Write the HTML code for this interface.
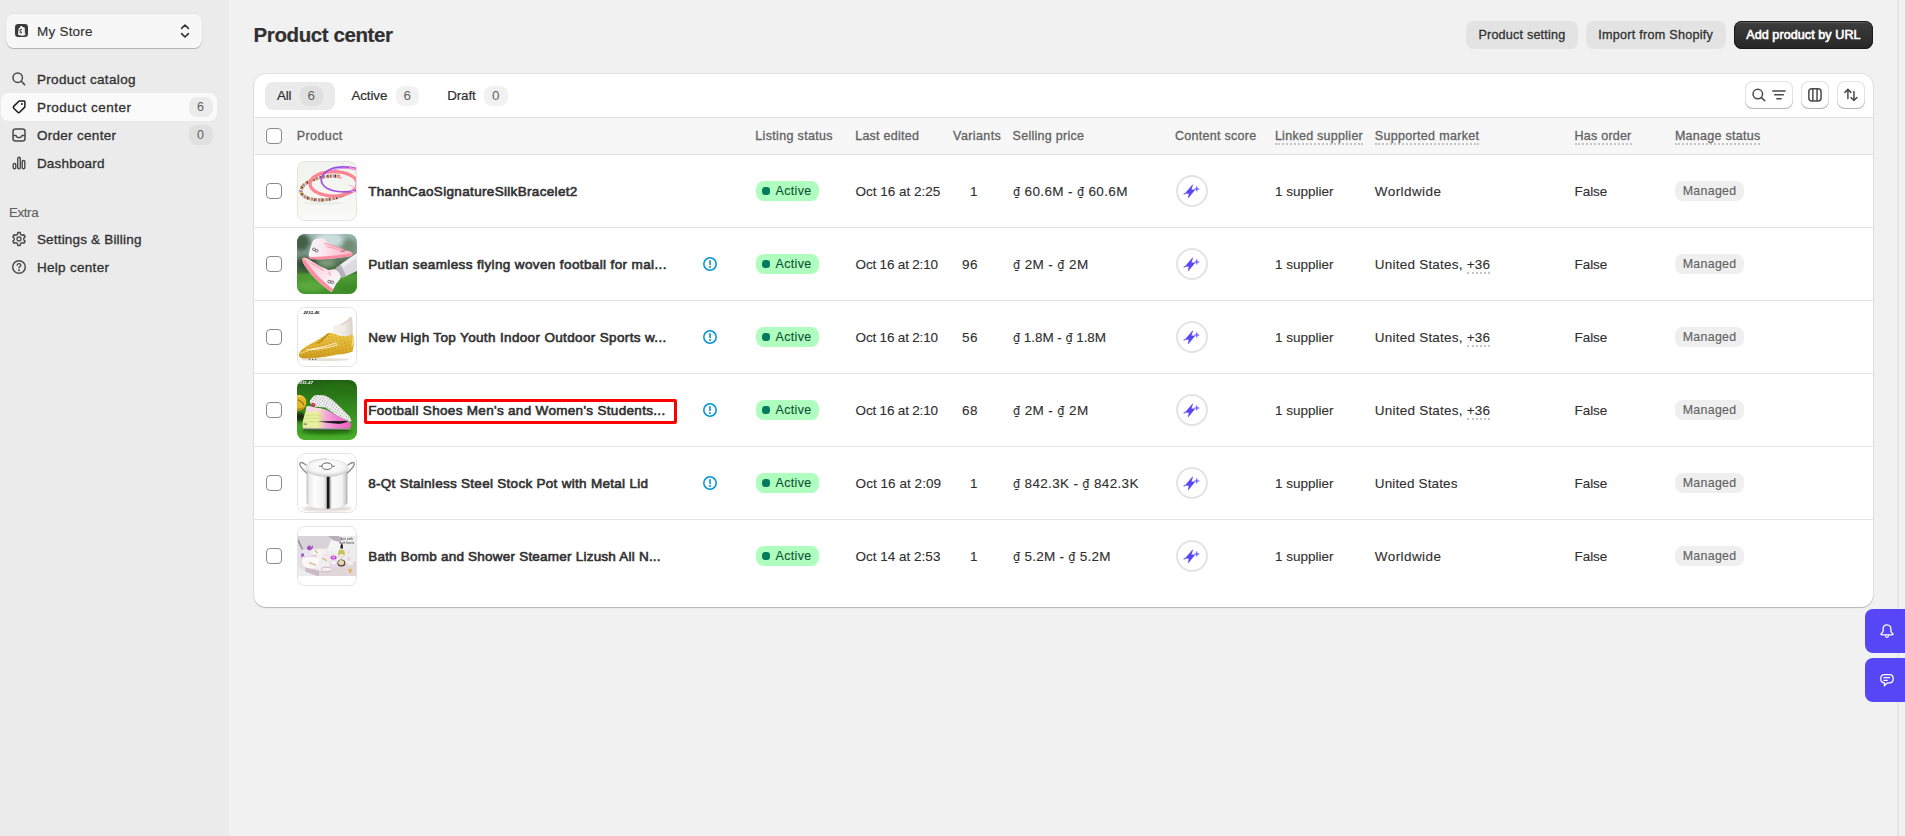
<!DOCTYPE html>
<html lang="en">
<head>
<meta charset="utf-8">
<title>Product center</title>
<style>
*,*:before,*:after{box-sizing:border-box;margin:0;padding:0}
html,body{width:1905px;height:836px;overflow:hidden}
body{background:#f1f1f1;font-family:"Liberation Sans",Arial,sans-serif;font-size:13px;color:#303030;position:relative}
.t{position:absolute;white-space:nowrap;line-height:16px;height:16px}
.sb{-webkit-text-stroke:.6px currentColor}
.md{-webkit-text-stroke:.3px currentColor}
.nv{-webkit-text-stroke:.32px currentColor}
.m2{-webkit-text-stroke:.2px currentColor}
.lt{-webkit-text-stroke:.12px currentColor}
#side{position:absolute;left:0;top:0;width:229px;height:836px;background:#ebebeb}
#store{position:absolute;left:6px;top:14px;width:196px;height:34px;background:#f7f7f7;border-radius:8px;box-shadow:0 1px 0 0 #b5b5b5,0 0 0 1px rgba(0,0,0,.03)}
#store .ico{position:absolute;left:8.6px;top:10.2px;width:13px;height:13px}
#store .chev{position:absolute;left:171px;top:8px;width:16px;height:18px}
.nav{position:absolute;left:1px;width:216px;height:28px;border-radius:8px}
.nav.sel{background:#fafafa}
.nav svg{position:absolute;left:8px;top:4px;width:20px;height:20px}
.nav .b{position:absolute;right:4px;top:4px;width:24px;height:20px;border-radius:8px;background:#e0e0e0}
.nav.sel .b{background:#ebebeb}
.btn{position:absolute;top:21px;height:28px;border-radius:8px;background:#e3e3e3}
.btn.pri{background:linear-gradient(180deg,#3e3e3e,#262626);box-shadow:inset 0 0 0 1px #1a1a1a,inset 0 2px 0 0 rgba(255,255,255,.16)}
#card{position:absolute;left:254px;top:74px;width:1619px;height:533px;background:#fff;border-radius:12px;box-shadow:0 1px 1px 0 rgba(0,0,0,.2),0 0 0 1px #e2e2e2}
.tab{position:absolute;top:82px;height:28px;border-radius:8px}
.tab.sel{background:#ebebeb}
.cnt{position:absolute;top:86px;height:20px;width:23px;border-radius:8px;background:#f1f1f1}
.cnt.sel{background:#e0e0e0}
.tool{position:absolute;top:81px;height:28px;border-radius:8px;background:#fff;box-shadow:inset 0 -1px 0 0 #b5b5b5,inset 0 0 0 1px #e3e3e3}
.tool svg{position:absolute;top:4px;width:20px;height:20px}
#thead{position:absolute;left:254px;top:117px;width:1619px;height:38px;background:#f7f7f7;border-top:1px solid #e3e3e3;border-bottom:1px solid #e3e3e3}
.u{border-bottom:2px dotted #c4c4c4}
.t.u{height:17px}
.hr{position:absolute;left:254px;width:1619px;height:1px;background:#e3e3e3}
.cb{position:absolute;width:16px;height:16px;border-radius:4px;border:1px solid #8a8a8a;background:#fff}
.thumb{position:absolute;left:297px;width:60px;height:60px;border-radius:8px;overflow:hidden;background:#fff}
.thumb svg{display:block;width:60px;height:60px}
.thumb.bd:after{content:"";position:absolute;left:0;top:0;width:60px;height:60px;border-radius:8px;border:1px solid #e3e3e3}
.info{position:absolute;left:702px;width:16px;height:16px}
.st{position:absolute;left:756px;width:63px;height:20px;border-radius:8px;background:#affebf}
.st i{position:absolute;left:6px;top:6px;width:8px;height:8px;border-radius:3.2px;background:#047b5d;display:block}
.cs{position:absolute;left:1176px;width:32px;height:32px;border-radius:50%;border:2px solid #e3e3e3;background:#fff}
.cs svg{position:absolute;left:-2px;top:-2px;width:32px;height:32px}
.ms{position:absolute;left:1675px;width:69px;height:20px;border-radius:8px;background:#efefef}
.hl{position:absolute;left:364px;top:399px;width:313px;height:25px;border:3px solid #f00;border-radius:2px}
.fab{position:absolute;left:1865px;width:40px;height:44px;background:#5646f5;border-radius:8px 0 0 8px}
.fab svg{position:absolute;left:14px;top:14px;width:16px;height:16px}
#sb{position:absolute;left:1897px;top:0;width:2px;height:836px;background:#e4e4e4}
.dd{font-family:"DejaVu Sans Condensed","DejaVu Sans",sans-serif;font-size:.93em}
.sbt{-webkit-text-stroke:.2px currentColor;font-weight:700}
</style>
</head>
<body>
<div id="side">
  <div id="store">
    <svg class="ico" viewBox="0 0 14 14"><rect x="0" y="0" width="14" height="14" rx="3.5" fill="#3a3a3a"/><path d="M3.2 11.6 L4 4.6 L5.2 4.2 C5.4 3 6 2.2 6.9 2.2 C7.6 2.2 8 2.8 8.1 3.6 L9.2 3.4 L10.2 4 L11.2 11.9 L7.6 12.6 Z" fill="#fff"/><path d="M9.2 3.4 L10.2 4 L11.2 11.9 L9.3 12.25 Z" fill="#d6d6d6"/><path d="M7.6 5.9 C6.2 5.3 5.2 6 5.3 7 C5.4 8.2 7 8.1 7 9.1 C7 9.9 5.8 9.9 4.9 9.3" fill="none" stroke="#3a3a3a" stroke-width="1.1"/></svg>
    <svg class="chev" viewBox="0 0 16 18"><path d="M4.6 6.4 L8 3 L11.4 6.4 M4.6 11.6 L8 15 L11.4 11.6" fill="none" stroke="#303030" stroke-width="1.6" stroke-linecap="round" stroke-linejoin="round"/></svg>
  </div>
  <div class="nav" style="top:65px"><svg viewBox="0 0 20 20"><circle cx="8.7" cy="8.7" r="4.7" fill="none" stroke="#4a4a4a" stroke-width="1.5"/><path d="M12.2 12.2 L15.6 15.6" stroke="#4a4a4a" stroke-width="1.5" stroke-linecap="round"/></svg></div>
  <div class="nav sel" style="top:93px"><svg viewBox="0 0 20 20"><path d="M10.6 4.1 L15 4.1 Q15.9 4.1 15.9 5 L15.9 9.4 Q15.9 10 15.5 10.4 L10.6 15.3 Q9.7 16.2 8.8 15.3 L4.7 11.2 Q3.8 10.3 4.7 9.4 L9.6 4.5 Q10 4.1 10.6 4.1 Z" fill="none" stroke="#1a1a1a" stroke-width="1.5" stroke-linejoin="round"/><circle cx="12.9" cy="7.1" r="1" fill="#1a1a1a"/></svg><div class="b"></div></div>
  <div class="nav" style="top:121px"><svg viewBox="0 0 20 20"><rect x="4" y="4" width="12" height="12" rx="2.5" fill="none" stroke="#4a4a4a" stroke-width="1.5"/><path d="M4 10.6 L7 10.6 C7.4 10.6 7.5 12.4 8.6 12.4 L11.4 12.4 C12.5 12.4 12.6 10.6 13 10.6 L16 10.6" fill="none" stroke="#4a4a4a" stroke-width="1.5" stroke-linejoin="round"/></svg><div class="b"></div></div>
  <div class="nav" style="top:149px"><svg viewBox="0 0 20 20"><rect x="4.2" y="10.5" width="2.6" height="5.2" rx="1.3" fill="none" stroke="#4a4a4a" stroke-width="1.4"/><rect x="8.7" y="4.3" width="2.6" height="11.4" rx="1.3" fill="none" stroke="#4a4a4a" stroke-width="1.4"/><rect x="13.2" y="7.5" width="2.6" height="8.2" rx="1.3" fill="none" stroke="#4a4a4a" stroke-width="1.4"/></svg></div>
  <div class="nav" style="top:225px"><svg viewBox="0 0 20 20"><path d="M11.51 5.34 L11.25 3.57 L8.75 3.57 L8.49 5.34 L6.72 6.36 L5.06 5.70 L3.81 7.87 L5.21 8.98 L5.21 11.02 L3.81 12.13 L5.06 14.30 L6.72 13.64 L8.49 14.66 L8.75 16.43 L11.25 16.43 L11.51 14.66 L13.28 13.64 L14.94 14.30 L16.19 12.13 L14.79 11.02 L14.79 8.98 L16.19 7.87 L14.94 5.70 L13.28 6.36 Z" fill="none" stroke="#4a4a4a" stroke-width="1.4" stroke-linejoin="round"/><rect x="8" y="8" width="4" height="4" rx="1.7" fill="none" stroke="#4a4a4a" stroke-width="1.4"/></svg></div>
  <div class="nav" style="top:253px"><svg viewBox="0 0 20 20"><circle cx="10" cy="10" r="6.3" fill="none" stroke="#4a4a4a" stroke-width="1.5"/><path d="M8.2 8.3 C8.2 7.2 9 6.6 10 6.6 C11 6.6 11.8 7.2 11.8 8.2 C11.8 9.4 10 9.5 10 10.9" fill="none" stroke="#4a4a4a" stroke-width="1.4" stroke-linecap="round"/><circle cx="10" cy="13.2" r=".95" fill="#4a4a4a"/></svg></div>
</div>
<div class="btn" style="left:1466px;width:112px"></div>
<div class="btn" style="left:1586px;width:140px"></div>
<div class="btn pri" style="left:1734px;width:139px"></div>
<div id="card"></div>
<div class="tab sel" style="left:265px;width:70px"></div>
<div class="cnt sel" style="left:300px"></div>
<div class="cnt" style="left:396px"></div>
<div class="cnt" style="left:484px;width:24px"></div>
<div class="tool" style="left:1745px;width:48px">
  <svg style="left:4px" viewBox="0 0 20 20"><circle cx="8.8" cy="9.1" r="4.75" fill="none" stroke="#4a4a4a" stroke-width="1.5"/><path d="M12.3 12.6 L15.8 15.6" stroke="#4a4a4a" stroke-width="1.5" stroke-linecap="round"/></svg>
  <svg style="left:24px" viewBox="0 0 20 20"><path d="M3.8 5.9 H16.1 M5.7 9.85 H14.4 M7.8 13.8 H12.1" stroke="#4a4a4a" stroke-width="1.5" stroke-linecap="round"/></svg>
</div>
<div class="tool" style="left:1801px;width:28px"><svg style="left:4px" viewBox="0 0 20 20"><rect x="3.85" y="3.85" width="12.2" height="12.1" rx="3" fill="none" stroke="#4a4a4a" stroke-width="1.5"/><path d="M7.85 3.8 V16 M12.05 3.8 V16" stroke="#4a4a4a" stroke-width="1.5"/></svg></div>
<div class="tool" style="left:1837px;width:28px"><svg style="left:4px" viewBox="0 0 20 20"><path d="M6.9 13.4 V4.6 M3.9 7.4 L6.9 4.4 L9.9 7.4 M12.95 6.6 V15.3 M9.95 12.5 L12.95 15.5 L15.95 12.5" fill="none" stroke="#4a4a4a" stroke-width="1.5" stroke-linecap="round" stroke-linejoin="round"/></svg></div>
<div id="thead"></div>
<div class="cb" style="left:266px;top:128px"></div>
<div class="hr" style="top:227px"></div>
<div class="cb" style="left:266px;top:183px"></div>
<div class="thumb bd" style="top:161px"><svg viewBox="0 0 60 60"><defs><linearGradient id="g1b" x1="0" y1="0" x2="0" y2="1"><stop offset="0" stop-color="#f1f3ee"/><stop offset=".55" stop-color="#f5f6f2"/><stop offset="1" stop-color="#fafaf8"/></linearGradient><filter id="f1" x="-10%" y="-10%" width="120%" height="120%"><feGaussianBlur stdDeviation=".35"/></filter><clipPath id="c1"><path d="M0 0 H43.5 V30 H48.5 V45 H0 Z"/></clipPath></defs>
<rect width="60" height="60" fill="url(#g1b)"/>
<g filter="url(#f1)" fill="none">
<ellipse cx="26" cy="42" rx="20" ry="1.8" fill="#eceee8" stroke="none"/>
<path d="M46 0 L46.5 12 M59 8 L60 30" stroke="#f3d9ea" stroke-width=".6"/>
<g clip-path="url(#c1)"><g transform="rotate(-8 29.7 27)"><ellipse cx="29.7" cy="27" rx="26" ry="11.5" stroke="#c8a27c" stroke-width="3"/>
<ellipse cx="29.7" cy="27" rx="26" ry="11.5" stroke="#26337f" stroke-width="3" stroke-dasharray="1.1 6.1"/>
<ellipse cx="29.7" cy="27" rx="26" ry="11.5" stroke="#f2d33c" stroke-width="3" stroke-dasharray="1.2 6" stroke-dashoffset="-1.2"/>
<ellipse cx="29.7" cy="27" rx="26" ry="11.5" stroke="#e6508c" stroke-width="3" stroke-dasharray="1.1 6.1" stroke-dashoffset="-2.5"/>
<ellipse cx="29.7" cy="27" rx="26" ry="11.5" stroke="#5ab6e6" stroke-width="3" stroke-dasharray="1 6.2" stroke-dashoffset="-3.7"/>
<ellipse cx="29.7" cy="27" rx="26" ry="11.5" stroke="#f4ead8" stroke-width="3" stroke-dasharray=".9 6.3" stroke-dashoffset="-4.8"/>
<ellipse cx="29.7" cy="27" rx="26" ry="11.5" stroke="#e77f45" stroke-width="3" stroke-dasharray=".9 6.3" stroke-dashoffset="-5.9"/></g></g>
<ellipse cx="36.6" cy="22.8" rx="23.6" ry="12.2" stroke="#fd7c8b" stroke-width="3.2"/>
<ellipse cx="36.6" cy="22.8" rx="23.6" ry="12.2" stroke="#ff9ca6" stroke-width="1.4" stroke-dasharray=".8 .9"/>
<path d="M60 7.6 C52 5.4 40 5 33 8.6 C24 13 22 20 27 25 C32 30 44 32.5 60 29.6" stroke="#a04fe0" stroke-width="1.7"/>
<path d="M60 9 C52 6.8 41 6.6 35 9.8" stroke="#c07af0" stroke-width=".8"/>
<path d="M52 6.6 L59 8.4" stroke="#f58ccf" stroke-width="1.8"/>
<path d="M41 15.2 l4 1.6 l-2.4 .8 z" fill="#f7a3c4" stroke="#f7a3c4" stroke-width=".8"/>
<path d="M52 24 L60 27.5 M54 30 L60 31.5" stroke="#efb6e8" stroke-width="1"/>
</g></svg>
</div>
<div class="st" style="top:181px"><i></i></div>
<div class="cs" style="top:175px"><svg viewBox="0 0 32 32"><path d="M16.7 9.7 L9.3 18.3 L13.1 18.5 L12.2 23.1 L18.8 14.9 L15.3 14.7 Z" fill="#5646f5" stroke="#5646f5" stroke-width=".5" stroke-linejoin="round"/><path d="M20.8 11.8 v4.2 M18.7 13.9 h4.2 M8 19 l1.2 -.4" stroke="#5646f5" stroke-width="1.05" stroke-linecap="round"/></svg></div>
<div class="ms" style="top:181px"></div>
<div class="hr" style="top:300px"></div>
<div class="cb" style="left:266px;top:256px"></div>
<div class="thumb" style="top:234px"><svg viewBox="0 0 60 60"><defs><linearGradient id="g2b" x1="0" y1="0" x2="0" y2="1"><stop offset="0" stop-color="#9fb9b4"/><stop offset=".3" stop-color="#7f9a8c"/><stop offset=".5" stop-color="#4c6a49"/><stop offset=".63" stop-color="#3f6a35"/><stop offset=".68" stop-color="#4f9a34"/><stop offset="1" stop-color="#3f8f2a"/></linearGradient><filter id="f2a" x="-30%" y="-30%" width="160%" height="160%"><feGaussianBlur stdDeviation="2.2"/></filter><filter id="f2" x="-10%" y="-10%" width="120%" height="120%"><feGaussianBlur stdDeviation=".4"/></filter><linearGradient id="g2u" x1="0" y1="0" x2="1" y2="0"><stop offset="0" stop-color="#f8f4f7"/><stop offset=".3" stop-color="#f9eaf0"/><stop offset=".6" stop-color="#fbcfdb"/><stop offset="1" stop-color="#ffaabd"/></linearGradient><linearGradient id="g2l" x1="0" y1="0" x2="1" y2="1"><stop offset="0" stop-color="#fdb9c9"/><stop offset=".4" stop-color="#fbd9e3"/><stop offset=".7" stop-color="#f8f2f6"/></linearGradient></defs>
<rect width="60" height="60" fill="url(#g2b)"/>
<g filter="url(#f2a)"><ellipse cx="4" cy="8" rx="9" ry="9" fill="#3f5f45"/><ellipse cx="32" cy="6" rx="14" ry="8" fill="#c9dedd"/><ellipse cx="52" cy="12" rx="7" ry="7" fill="#6f8c73"/><ellipse cx="10" cy="30" rx="10" ry="6" fill="#2f4a30"/><ellipse cx="52" cy="33" rx="9" ry="5" fill="#35552f"/><ellipse cx="30" cy="29" rx="9" ry="4" fill="#7f9d80"/><ellipse cx="14" cy="52" rx="14" ry="6" fill="#5aa93c"/><ellipse cx="52" cy="55" rx="10" ry="5" fill="#3c8a27"/></g>
<g filter="url(#f2)">
<path d="M38.5 34.5 C45 29 53 23.6 60 19.3 L60 37 C55 39.6 50 41.6 45.2 43.8 Z" fill="#dddbe0"/><path d="M38.5 34.5 L43.6 30.6 C45.6 34.6 47.6 38.6 49.2 42 L45.2 43.8 Z" fill="#b4b1b8"/><path d="M44 30.4 C50 26 55 22.6 60 19.3 L60 24 C55 27 50 30 46 33.4 Z" fill="#efedf1"/>
<path d="M16.2 6.2 C19 4.4 23.6 3.6 27.1 4.6 C28.6 5.8 29.6 7.6 30.4 9.2 C34 11 40 13.6 46.9 16 C50 16.6 52.6 17 53.8 17.8 C55.4 18.6 56 19.8 55.4 20.6 C54.8 21.6 54 22 52.6 22.2 C40 24.4 26 25.6 15 25 C12.6 24.8 11.4 23.4 11.6 21.4 C12.4 16 14 10.6 16.2 6.2 Z" fill="url(#g2u)"/>
<path d="M11.7 21.6 C12.2 22.8 13.6 23 15.4 22.9 C28 22.7 42 21.2 55.4 19.4 C56 20.4 55.4 21.6 53.6 22.2 C40 24.6 26 25.8 15 25.3 C12.4 25.1 11.2 23.6 11.7 21.6 Z" fill="#ff8da1"/>
<path d="M27 9.6 C33 10 41 13.4 48 16.4 M30 12.6 C36 13.6 42 15.8 47 17.8" stroke="#ff9db1" stroke-width="1.1" fill="none"/>
<path d="M5.5 24 C6.6 23 8.6 23.4 10.6 24.6 C14 26.6 17.6 29 20 30.4 C23 32.2 26 33.6 28.4 34.6 C29.8 35.6 31 36.2 32.4 36 C34.4 35.4 36.6 35 38.5 35.3 C41 37 43 40 44 42.9 C43 45.6 41 47.6 39.3 49.6 C38 52.4 36.6 55 35.1 57.3 C34.6 57.8 34 57.8 33.4 57.4 C25 51.6 14 41.6 7.4 31.2 C5.8 28.6 4.8 26 5.5 24 Z" fill="url(#g2l)"/>
<path d="M5.5 24 C4.8 26 5.8 28.6 7.4 31.2 C14 41.6 25 51.6 33.4 57.4 C34.2 57.9 34.8 57.8 35.3 57 L36.2 55.2 C28 49.4 17.6 39.6 10.6 29.6 C9 27.4 7.4 25 5.5 24 Z" fill="#ff8da1"/>
<path d="M14 29 C18 31.4 23 34.6 27 36.6 M31.4 37.6 C32.4 39 33 40.4 33.6 41.6" stroke="#ff9fb3" stroke-width="1.2" fill="none"/>
<g fill="none" stroke="#2a2a2a" stroke-width=".55"><rect x="15.6" y="14.2" width="2.8" height="2.3" rx=".8" transform="rotate(14 17 15)"/><rect x="18.4" y="15.4" width="2.8" height="2.3" rx=".8" transform="rotate(14 19 16)"/><rect x="31" y="46.4" width="2.8" height="2.5" rx=".8" transform="rotate(8 32 47)"/><rect x="33.9" y="47" width="2.8" height="2.5" rx=".8" transform="rotate(8 35 48)"/><path d="M43.6 17.7 l4.6 -1.3" stroke-width=".45"/></g>
</g></svg>
</div>
<svg class="info" style="top:256px" viewBox="0 0 16 16"><circle cx="8" cy="8" r="6.2" fill="none" stroke="#0094d5" stroke-width="1.5"/><path d="M8 4.7 V8.5" stroke="#0094d5" stroke-width="1.6" stroke-linecap="round"/><circle cx="8" cy="11" r="1" fill="#0094d5"/></svg>
<div class="st" style="top:254px"><i></i></div>
<div class="cs" style="top:248px"><svg viewBox="0 0 32 32"><path d="M16.7 9.7 L9.3 18.3 L13.1 18.5 L12.2 23.1 L18.8 14.9 L15.3 14.7 Z" fill="#5646f5" stroke="#5646f5" stroke-width=".5" stroke-linejoin="round"/><path d="M20.8 11.8 v4.2 M18.7 13.9 h4.2 M8 19 l1.2 -.4" stroke="#5646f5" stroke-width="1.05" stroke-linecap="round"/></svg></div>
<div class="ms" style="top:254px"></div>
<div class="hr" style="top:373px"></div>
<div class="cb" style="left:266px;top:329px"></div>
<div class="thumb bd" style="top:307px"><svg viewBox="0 0 60 60"><defs><filter id="f3" x="-10%" y="-10%" width="120%" height="120%"><feGaussianBlur stdDeviation=".4"/></filter><linearGradient id="g3" x1="0" y1="0" x2="0" y2="1"><stop offset="0" stop-color="#eec848"/><stop offset=".6" stop-color="#e0b02c"/><stop offset="1" stop-color="#cc9c1e"/></linearGradient><pattern id="p3" width="3.6" height="3.2" patternUnits="userSpaceOnUse" patternTransform="rotate(-14)"><path d="M1.8 .5 l.7 1 l-.7 1 l-.7 -1 z" fill="#a98118" opacity=".75"/></pattern><linearGradient id="g3s" x1="0" y1="0" x2="1" y2="0"><stop offset="0" stop-color="#f6f2ee"/><stop offset=".6" stop-color="#efe9e4"/><stop offset="1" stop-color="#d9d0c9"/></linearGradient></defs>
<rect width="60" height="60" fill="#fff"/>
<g filter="url(#f3)">
<ellipse cx="28" cy="52.6" rx="24" ry="1.4" fill="#e4e0d8"/>
<path d="M36 18.6 C41 18 47 15 50.6 12.4 L52.6 9.8 L55 10.2 C55.6 16 56 23 55.6 28.6 C52 31 46 30.6 42 29 C39.6 28 37.4 27 36 26.6 Z" fill="url(#g3s)"/>
<path d="M44 17.4 C47 16 50 14 52.6 11.6 L53 12.6 C50.6 15 47.4 17 44.4 18.4 Z" fill="#e5c9c2"/>
<path d="M2 47 C3 42.6 12 37.4 22 32.2 L30 26.8 C33 25.6 36 26 38 27 C43 29.6 50 30.6 55.4 27.2 C57.4 30.6 57.2 38.6 55.6 44.4 C50.6 46.4 45 47 40 47.6 C30 50 15 52 6 51.4 C2.6 51 1.4 49 2 47 Z" fill="url(#g3)"/>
<path d="M2 47 C3 42.6 12 37.4 22 32.2 L30 26.8 C33 25.6 36 26 38 27 C43 29.6 50 30.6 55.4 27.2 C57.4 30.6 57.2 38.6 55.6 44.4 C50.6 46.4 45 47 40 47.6 C30 50 15 52 6 51.4 C2.6 51 1.4 49 2 47 Z" fill="url(#p3)"/>
<path d="M3 46.6 C8 44.6 14 42.6 20 41" stroke="#f2d778" stroke-width="1.2" fill="none" opacity=".8"/>
<path d="M9 43 C18 41.6 28 40 40 35.4 M14 42.8 C24 41.8 33 40.4 41 37.6" stroke="#fffdf2" stroke-width=".8" fill="none"/>
<path d="M19 36 l4.4 -.6 M21.4 34 l4.6 -1 M24 32 l4.6 -1.2 M26.6 30 l4.4 -1.6 M29 28 l4 -1.4 M22 36.4 l5 -5 M25 33.6 l4.6 -4.4" stroke="#b8860f" stroke-width=".9" fill="none"/>
<path d="M12 52.2 h1.4 M15 52.4 h1.4 M18 52.2 h1.2" stroke="#3a2c10" stroke-width=".9"/>
<path d="M54.6 31 c1.2 2 1.2 5 .4 7.6" stroke="#f5e9c4" stroke-width=".9" fill="none"/>
</g>
<text x="6.4" y="6.6" font-family="Liberation Sans,sans-serif" font-size="3.3" font-weight="700" font-style="italic" fill="#111" filter="url(#f3)" textLength="16" lengthAdjust="spacingAndGlyphs">2031-46</text>
</svg>
</div>
<svg class="info" style="top:329px" viewBox="0 0 16 16"><circle cx="8" cy="8" r="6.2" fill="none" stroke="#0094d5" stroke-width="1.5"/><path d="M8 4.7 V8.5" stroke="#0094d5" stroke-width="1.6" stroke-linecap="round"/><circle cx="8" cy="11" r="1" fill="#0094d5"/></svg>
<div class="st" style="top:327px"><i></i></div>
<div class="cs" style="top:321px"><svg viewBox="0 0 32 32"><path d="M16.7 9.7 L9.3 18.3 L13.1 18.5 L12.2 23.1 L18.8 14.9 L15.3 14.7 Z" fill="#5646f5" stroke="#5646f5" stroke-width=".5" stroke-linejoin="round"/><path d="M20.8 11.8 v4.2 M18.7 13.9 h4.2 M8 19 l1.2 -.4" stroke="#5646f5" stroke-width="1.05" stroke-linecap="round"/></svg></div>
<div class="ms" style="top:327px"></div>
<div class="hr" style="top:446px"></div>
<div class="cb" style="left:266px;top:402px"></div>
<div class="thumb" style="top:380px"><svg viewBox="0 0 60 60"><defs><filter id="f4" x="-10%" y="-10%" width="120%" height="120%"><feGaussianBlur stdDeviation=".4"/></filter><filter id="f4a" x="-30%" y="-30%" width="160%" height="160%"><feGaussianBlur stdDeviation="1.6"/></filter><linearGradient id="g4b" x1="0" y1="0" x2="0" y2="1"><stop offset="0" stop-color="#1b5410"/><stop offset=".35" stop-color="#2a7a18"/><stop offset=".75" stop-color="#3c9a22"/><stop offset="1" stop-color="#4bae2c"/></linearGradient><pattern id="p4g" width="2.2" height="2.6" patternUnits="userSpaceOnUse" patternTransform="rotate(20)"><path d="M.4 2.4 L1 .2 M1.6 2.6 L1.9 1" stroke="#4cae2c" stroke-width=".35" opacity=".6"/></pattern><pattern id="p4s" width="2.6" height="2.4" patternUnits="userSpaceOnUse" patternTransform="rotate(33)"><circle cx="1.3" cy="1.2" r=".55" fill="#8d8d8d"/></pattern><linearGradient id="g4u" x1="0" y1="0" x2="1" y2="0"><stop offset="0" stop-color="#e4eea0"/><stop offset=".3" stop-color="#eaf29c"/><stop offset=".48" stop-color="#f3a9dc"/><stop offset=".7" stop-color="#f27fd0"/><stop offset="1" stop-color="#ef62c2"/></linearGradient></defs>
<rect width="60" height="60" fill="url(#g4b)"/><rect width="60" height="60" fill="url(#p4g)"/>
<g filter="url(#f4a)"><ellipse cx="30" cy="51.6" rx="26" ry="2.6" fill="#22700f"/><ellipse cx="3" cy="37" rx="6" ry="4.4" fill="#1a2a0c"/><ellipse cx="42" cy="10" rx="16" ry="7" fill="#2a7417" opacity=".6"/></g>
<g filter="url(#f4)">
<circle cx="1.6" cy="22.6" r="7.8" fill="#e2b426"/><path d="M-4 18 a8 8 0 0 1 13 2 a12 12 0 0 0 -13 -2z" fill="#f2cf55"/><path d="M1 19.6 l5 3.4 l1 2.4" stroke="#5a4208" stroke-width=".8" fill="none"/><path d="M-6 27 a8 8 0 0 0 14 0 a14 10 0 0 1 -14 0z" fill="#b98b14"/>
<path d="M13 20.6 L16.6 16 C19 14.6 24 14.6 28 15.6 C33 17.6 38 22 43 27 L52.6 36.6 L54.6 41 L52 41.8 L40 35.4 L28.6 27.6 L18 26.8 L13 23 Z" fill="#f0f0f0"/>
<path d="M13 20.6 L16.6 16 C19 14.6 24 14.6 28 15.6 C33 17.6 38 22 43 27 L52.6 36.6 L54.6 41 L52 41.8 L40 35.4 L28.6 27.6 L18 26.8 L13 23 Z" fill="url(#p4s)"/>
<path d="M14.4 23.6 C15.4 22 17.4 22.6 18.6 24.6 L17.6 27.6 C16 26.6 14.6 25 14.4 23.6 Z" fill="#e62f68"/>
<path d="M9.6 26.6 C11.6 25.6 14.6 26.6 17.6 27.6 L29 29.4 L40 35.6 L53 42.4 C54.6 44 54.6 46.4 52.6 48.6 L6.2 48.4 C5 45.6 6 38.6 8.4 32 Z" fill="url(#g4u)"/>
<path d="M9.6 26.6 C11.6 25.6 14.6 26.6 17.6 27.6 L26 29 C24 31.4 17 32.4 9 31.4 Z" fill="#f6d7e6"/>
<path d="M8 36 C14 34.4 20 34.6 26 36.4 M7.4 39 C14 37.4 21 38 27 39.6 M7 42.4 C13 41 20 41.6 25 43" stroke="#c9d67e" stroke-width=".7" fill="none"/>
<path d="M20.6 41.4 C30 41.2 42 41 51.6 40.8 C49 43 44 44.2 40 43.8 C33 43 27 42.2 20.6 41.4 Z" fill="#1e1e1e"/>
<path d="M6.6 44 l3.4 .2" stroke="#222" stroke-width=".7"/>
<path d="M6 47.8 L52.8 48.4 L52 50 L6.6 49.6 Z" fill="#a7a7a7"/>
<path d="M6.4 49.8 L52 50.2" stroke="#23401a" stroke-width=".9"/>
</g>
<text x=".6" y="3.7" font-family="Liberation Sans,sans-serif" font-size="3.3" font-weight="700" font-style="italic" fill="#f4f4f4" filter="url(#f4)" textLength="15.4" lengthAdjust="spacingAndGlyphs">2031-47</text>
</svg>
</div>
<svg class="info" style="top:402px" viewBox="0 0 16 16"><circle cx="8" cy="8" r="6.2" fill="none" stroke="#0094d5" stroke-width="1.5"/><path d="M8 4.7 V8.5" stroke="#0094d5" stroke-width="1.6" stroke-linecap="round"/><circle cx="8" cy="11" r="1" fill="#0094d5"/></svg>
<div class="st" style="top:400px"><i></i></div>
<div class="cs" style="top:394px"><svg viewBox="0 0 32 32"><path d="M16.7 9.7 L9.3 18.3 L13.1 18.5 L12.2 23.1 L18.8 14.9 L15.3 14.7 Z" fill="#5646f5" stroke="#5646f5" stroke-width=".5" stroke-linejoin="round"/><path d="M20.8 11.8 v4.2 M18.7 13.9 h4.2 M8 19 l1.2 -.4" stroke="#5646f5" stroke-width="1.05" stroke-linecap="round"/></svg></div>
<div class="ms" style="top:400px"></div>
<div class="hr" style="top:519px"></div>
<div class="cb" style="left:266px;top:475px"></div>
<div class="thumb bd" style="top:453px"><svg viewBox="0 0 60 60"><defs><filter id="f5" x="-10%" y="-10%" width="120%" height="120%"><feGaussianBlur stdDeviation=".4"/></filter><filter id="f5a" x="-30%" y="-60%" width="160%" height="220%"><feGaussianBlur stdDeviation="1.2"/></filter><linearGradient id="g5" x1="0" y1="0" x2="1" y2="0"><stop offset="0" stop-color="#bdbdbd"/><stop offset=".06" stop-color="#ececec"/><stop offset=".2" stop-color="#fdfdfd"/><stop offset=".42" stop-color="#f1f1f1"/><stop offset=".485" stop-color="#c9c9c9"/><stop offset=".5" stop-color="#151515"/><stop offset=".55" stop-color="#1b1b1b"/><stop offset=".57" stop-color="#a9a9a9"/><stop offset=".62" stop-color="#fafafa"/><stop offset=".86" stop-color="#f4f4f4"/><stop offset=".95" stop-color="#d2d2d2"/><stop offset="1" stop-color="#a9a9a9"/></linearGradient><radialGradient id="g5l" cx=".5" cy=".45" r=".55"><stop offset="0" stop-color="#ffffff"/><stop offset=".7" stop-color="#f6f6f6"/><stop offset="1" stop-color="#dcdcdc"/></radialGradient></defs>
<rect width="60" height="60" fill="#fff"/>
<ellipse cx="30" cy="55.6" rx="25" ry="3" fill="#dedad6" filter="url(#f5a)"/>
<g filter="url(#f5)">
<path d="M9.6 20 C3.6 14.6 1.2 10.6 3.6 9.6 C5.6 9 7.6 11 9.4 12.2 M50.4 20 C56.4 14.6 58.8 10.6 56.4 9.6 C54.4 9 52.4 11 50.6 12.2" stroke="#8c8c8c" stroke-width="1.3" fill="none" stroke-linecap="round"/>
<path d="M9.6 17 L9.6 50 C12 57.6 48 57.6 50.4 50 L50.4 17 Z" fill="url(#g5)"/>
<ellipse cx="30" cy="15" rx="21.6" ry="8.8" fill="#cfcfcf"/>
<ellipse cx="30" cy="14.4" rx="21.2" ry="8.2" fill="url(#g5l)"/>
<ellipse cx="30" cy="13.2" rx="5.2" ry="3.3" fill="none" stroke="#5a5a5a" stroke-width=".9"/>
<path d="M22 13.2 h3 M35 13.2 h3" stroke="#5a5a5a" stroke-width=".8"/>
<path d="M12 9.4 C18 6.4 24 5.6 30 5.6" stroke="#bdbdbd" stroke-width=".6" fill="none"/>
</g></svg>
</div>
<svg class="info" style="top:475px" viewBox="0 0 16 16"><circle cx="8" cy="8" r="6.2" fill="none" stroke="#0094d5" stroke-width="1.5"/><path d="M8 4.7 V8.5" stroke="#0094d5" stroke-width="1.6" stroke-linecap="round"/><circle cx="8" cy="11" r="1" fill="#0094d5"/></svg>
<div class="st" style="top:473px"><i></i></div>
<div class="cs" style="top:467px"><svg viewBox="0 0 32 32"><path d="M16.7 9.7 L9.3 18.3 L13.1 18.5 L12.2 23.1 L18.8 14.9 L15.3 14.7 Z" fill="#5646f5" stroke="#5646f5" stroke-width=".5" stroke-linejoin="round"/><path d="M20.8 11.8 v4.2 M18.7 13.9 h4.2 M8 19 l1.2 -.4" stroke="#5646f5" stroke-width="1.05" stroke-linecap="round"/></svg></div>
<div class="ms" style="top:473px"></div>
<div class="cb" style="left:266px;top:548px"></div>
<div class="thumb bd" style="top:526px"><svg viewBox="0 0 60 60"><defs><filter id="f6" x="-10%" y="-10%" width="120%" height="120%"><feGaussianBlur stdDeviation=".45"/></filter></defs>
<rect width="60" height="60" fill="#fff"/>
<rect x="0" y="10" width="60" height="40" fill="#eeedee"/>
<g filter="url(#f6)">
<path d="M0 10 L41.6 10 L46 14 L33 22 L5 24 L0 17 Z" fill="#d7d3d8"/>
<path d="M31 10 L41.6 10 L45.6 13.6 L40 17 Z" fill="#b7b2b8"/>
<path d="M0 14 L5 24 L9 46 L0 40 Z" fill="#e3e0e4"/><path d="M0 14 L1.6 13.6 L6 23 L5 24 Z" fill="#8f8a90"/>
<path d="M22 44.6 L57.6 35.4 L60 36.6 L60 50 L22 50 Z" fill="#e1d6da"/>
<path d="M8.4 41 L22 44.6 L22 50 L20 50 L8.4 45.8 Z" fill="#cbbcc3"/>
<path d="M34 14 L44 16 L46 28 L30 24 Z" fill="#f4f3f5"/>
<ellipse cx="13.6" cy="35" rx="8.6" ry="7.4" fill="#faf9f8"/><ellipse cx="22" cy="28" rx="6.6" ry="5" fill="#f6f3f1"/><ellipse cx="28" cy="41" rx="7.4" ry="5" fill="#f3eef0"/><ellipse cx="29.6" cy="30.6" rx="4.8" ry="4" fill="#f1e8ec"/>
<path d="M24 42.6 c3 -2 7 -2 10.6 -.4" stroke="#c9a4b4" stroke-width=".8" fill="none"/><path d="M23.6 44.6 c3 1.6 7 1.8 11 .2" stroke="#c9a4b4" stroke-width=".8" fill="none"/>
<path d="M12 36.6 l7 2.6 M25 32 l4.6 2.6 M18 24 l2.4 3.4" stroke="#d9b678" stroke-width="1.3"/>
<path d="M9.6 21.6 l3 -2.6 l1.6 2 l2 -2 l-.6 3.6 l-2 1.6 l-2.6 .2 z M4 28 l2.6 -1 l.6 3 l-2.6 1.6 z" fill="#a452c4"/>
<path d="M7 31 C11 30 16 29.6 20 30" stroke="#b98acb" stroke-width=".7" fill="none"/>
<ellipse cx="11" cy="28" rx="3.6" ry="3.6" fill="#efe4f1"/>
<ellipse cx="36.6" cy="31.6" rx="3" ry="2.2" fill="#c93fc9"/><ellipse cx="36.6" cy="31.2" rx="1.6" ry="1" fill="#e9a6ea"/>
<ellipse cx="36.6" cy="38" rx="4.2" ry="4.6" fill="#e6d6ea"/><ellipse cx="36.6" cy="36.6" rx="2.6" ry="2" fill="#f6f0f6"/>
<path d="M43.6 19.6 l1.2 -2.6 l1 2.6 l.2 3 l-2.6 0 z" fill="#1c1c1c"/>
<ellipse cx="44.4" cy="27.4" rx="3.4" ry="4" fill="#c9c05a"/><ellipse cx="44.4" cy="29.6" rx="2.8" ry="1.6" fill="#ece7d8"/>
<ellipse cx="44.4" cy="37" rx="4" ry="3.6" fill="#4a3f38"/><ellipse cx="44.2" cy="36.6" rx="3" ry="2.6" fill="#e5d6b4"/>
<path d="M50 27 l1.8 -3.6 l1 .6 l-.8 4.4 z" fill="#e9dcd0"/><ellipse cx="51.6" cy="33" rx="2.4" ry="2.2" fill="#ead9e4"/><rect x="51" y="36" width="5" height="3" fill="#f3efe8"/>
<path d="M52.4 43 l.8 3 l.8 -3 l.6 .2 l-1.2 4 l-1.6 -4 z" fill="#e8a11f" stroke="#e8a11f" stroke-width=".5"/>
</g>
<g font-family="Liberation Sans,sans-serif" font-size="2.9" fill="#3a3a3a" filter="url(#f6)"><text x="43.6" y="14" textLength="12.6" lengthAdjust="spacingAndGlyphs">Set with</text><text x="42.6" y="18" textLength="14.6" lengthAdjust="spacingAndGlyphs">Bath Scents</text></g>
</svg>
</div>
<div class="st" style="top:546px"><i></i></div>
<div class="cs" style="top:540px"><svg viewBox="0 0 32 32"><path d="M16.7 9.7 L9.3 18.3 L13.1 18.5 L12.2 23.1 L18.8 14.9 L15.3 14.7 Z" fill="#5646f5" stroke="#5646f5" stroke-width=".5" stroke-linejoin="round"/><path d="M20.8 11.8 v4.2 M18.7 13.9 h4.2 M8 19 l1.2 -.4" stroke="#5646f5" stroke-width="1.05" stroke-linecap="round"/></svg></div>
<div class="ms" style="top:546px"></div>
<div class="t lt" id="x_store" style="left:37.10px;top:24.00px;font-size:13.5px;color:#303030;letter-spacing:0.198px">My Store</div>
<div class="t nv" id="x_nav0" style="left:36.90px;top:72.00px;font-size:13.5px;color:#303030;letter-spacing:0.342px">Product catalog</div>
<div class="t nv" id="x_nav1" style="left:36.90px;top:100.00px;font-size:13.5px;color:#303030;letter-spacing:0.485px">Product center</div>
<div class="t nv" id="x_nav2" style="left:36.90px;top:128.00px;font-size:13.5px;color:#303030;letter-spacing:0.302px">Order center</div>
<div class="t nv" id="x_nav3" style="left:36.90px;top:156.00px;font-size:13.5px;color:#303030;letter-spacing:0.194px">Dashboard</div>
<div class="t nv" id="x_nav4" style="left:36.90px;top:232.00px;font-size:13.5px;color:#303030;letter-spacing:0.188px">Settings &amp; Billing</div>
<div class="t nv" id="x_nav5" style="left:36.90px;top:260.00px;font-size:13.5px;color:#303030;letter-spacing:0.305px">Help center</div>
<div class="t lt" id="x_extra" style="left:8.90px;top:205.00px;font-size:13.4px;color:#616161;letter-spacing:-0.391px">Extra</div>
<div class="t " id="x_b6" style="left:197.10px;top:99.30px;font-size:12.5px;color:#616161;letter-spacing:0.000px">6</div>
<div class="t " id="x_b0" style="left:197.10px;top:127.30px;font-size:12.5px;color:#616161;letter-spacing:0.000px">0</div>
<div class="t sbt" id="x_title" style="left:253.60px;top:27.30px;font-size:20.5px;color:#303030;letter-spacing:-0.406px">Product center</div>
<div class="t md" id="x_btn1" style="left:1478.40px;top:27.30px;font-size:12.6px;color:#303030;letter-spacing:0.199px">Product setting</div>
<div class="t md" id="x_btn2" style="left:1598.30px;top:27.30px;font-size:12.6px;color:#303030;letter-spacing:0.256px">Import from Shopify</div>
<div class="t sb" id="x_btn3" style="left:1746.20px;top:27.30px;font-size:12.6px;color:#fff;letter-spacing:0.058px">Add product by URL</div>
<div class="t m2" id="x_tabAll" style="left:276.90px;top:88.20px;font-size:13.4px;color:#303030;letter-spacing:-0.095px">All</div>
<div class="t m2" id="x_tabAct" style="left:351.40px;top:88.20px;font-size:13.4px;color:#303030;letter-spacing:-0.094px">Active</div>
<div class="t m2" id="x_tabDr" style="left:447.20px;top:88.20px;font-size:13.4px;color:#303030;letter-spacing:-0.108px">Draft</div>
<div class="t " id="x_cAll" style="left:307.60px;top:88.20px;font-size:13.4px;color:#616161;letter-spacing:0.000px">6</div>
<div class="t " id="x_cAct" style="left:403.60px;top:88.20px;font-size:13.4px;color:#616161;letter-spacing:0.000px">6</div>
<div class="t " id="x_cDr" style="left:491.90px;top:88.20px;font-size:13.4px;color:#616161;letter-spacing:0.000px">0</div>
<div class="t md" id="x_hP" style="left:296.80px;top:128.00px;font-size:12.5px;color:#616161;letter-spacing:0.401px">Product</div>
<div class="t md" id="x_hL" style="left:755.30px;top:128.00px;font-size:12.5px;color:#616161;letter-spacing:0.333px">Listing status</div>
<div class="t md" id="x_hE" style="left:855.20px;top:128.00px;font-size:12.5px;color:#616161;letter-spacing:0.253px">Last edited</div>
<div class="t md" id="x_hV" style="left:953.10px;top:128.00px;font-size:12.5px;color:#616161;letter-spacing:0.395px">Variants</div>
<div class="t md" id="x_hS" style="left:1012.60px;top:128.00px;font-size:12.5px;color:#616161;letter-spacing:0.276px">Selling price</div>
<div class="t md" id="x_hC" style="left:1174.90px;top:128.00px;font-size:12.5px;color:#616161;letter-spacing:0.289px">Content score</div>
<div class="t md u" id="x_hK" style="left:1274.90px;top:128.00px;font-size:12.5px;color:#616161;letter-spacing:0.272px">Linked supplier</div>
<div class="t md u" id="x_hM" style="left:1374.80px;top:128.00px;font-size:12.5px;color:#616161;letter-spacing:0.323px">Supported market</div>
<div class="t md u" id="x_hH" style="left:1574.60px;top:128.00px;font-size:12.5px;color:#616161;letter-spacing:0.226px">Has order</div>
<div class="t md u" id="x_hG" style="left:1674.90px;top:128.00px;font-size:12.5px;color:#616161;letter-spacing:0.275px">Manage status</div>
<div class="t sb" id="x_r0n" style="left:368.20px;top:184.20px;font-size:13.5px;color:#303030;letter-spacing:0.330px">ThanhCaoSignatureSilkBracelet2</div>
<div class="t lt" id="x_r0a" style="left:775.60px;top:183.00px;font-size:12.4px;color:#0c5132;letter-spacing:0.370px">Active</div>
<div class="t lt" id="x_r0e" style="left:855.60px;top:184.20px;font-size:13.5px;color:#303030;letter-spacing:-0.016px">Oct 16 at 2:25</div>
<div class="t lt" id="x_r0v" style="right:927.40px;top:184.20px;font-size:13.5px;color:#303030;letter-spacing:0px">1</div>
<div class="t lt" id="x_r0p" style="left:1013.00px;top:184.20px;font-size:13.5px;color:#303030;letter-spacing:0.341px"><span class="dd">₫</span> 60.6M - <span class="dd">₫</span> 60.6M</div>
<div class="t lt" id="x_r0s" style="left:1274.90px;top:184.20px;font-size:13.5px;color:#303030;letter-spacing:0.017px">1 supplier</div>
<div class="t lt" id="x_r0m" style="left:1374.80px;top:184.20px;font-size:13.5px;color:#303030;letter-spacing:0.427px">Worldwide</div>
<div class="t lt" id="x_r0h" style="left:1574.60px;top:184.20px;font-size:13.5px;color:#303030;letter-spacing:-0.079px">False</div>
<div class="t lt" id="x_r0g" style="left:1682.70px;top:183.00px;font-size:12.4px;color:#616161;letter-spacing:0.305px">Managed</div>
<div class="t sb" id="x_r1n" style="left:368.20px;top:257.20px;font-size:13.5px;color:#303030;letter-spacing:0.374px">Putian seamless flying woven football for mal...</div>
<div class="t lt" id="x_r1a" style="left:775.60px;top:256.00px;font-size:12.4px;color:#0c5132;letter-spacing:0.370px">Active</div>
<div class="t lt" id="x_r1e" style="left:855.60px;top:257.20px;font-size:13.5px;color:#303030;letter-spacing:-0.186px">Oct 16 at 2:10</div>
<div class="t lt" id="x_r1v" style="right:926.70px;top:257.20px;font-size:13.5px;color:#303030;letter-spacing:0.7px">96</div>
<div class="t lt" id="x_r1p" style="left:1013.00px;top:257.20px;font-size:13.5px;color:#303030;letter-spacing:0.379px"><span class="dd">₫</span> 2M - <span class="dd">₫</span> 2M</div>
<div class="t lt" id="x_r1s" style="left:1274.90px;top:257.20px;font-size:13.5px;color:#303030;letter-spacing:0.017px">1 supplier</div>
<div class="t lt" id="x_r1m" style="left:1374.80px;top:257.20px;font-size:13.5px;color:#303030;letter-spacing:0.225px">United States, <span class="u">+36</span></div>
<div class="t lt" id="x_r1h" style="left:1574.60px;top:257.20px;font-size:13.5px;color:#303030;letter-spacing:-0.079px">False</div>
<div class="t lt" id="x_r1g" style="left:1682.70px;top:256.00px;font-size:12.4px;color:#616161;letter-spacing:0.305px">Managed</div>
<div class="t sb" id="x_r2n" style="left:368.20px;top:330.20px;font-size:13.5px;color:#303030;letter-spacing:0.350px">New High Top Youth Indoor Outdoor Sports w...</div>
<div class="t lt" id="x_r2a" style="left:775.60px;top:329.00px;font-size:12.4px;color:#0c5132;letter-spacing:0.370px">Active</div>
<div class="t lt" id="x_r2e" style="left:855.60px;top:330.20px;font-size:13.5px;color:#303030;letter-spacing:-0.186px">Oct 16 at 2:10</div>
<div class="t lt" id="x_r2v" style="right:926.70px;top:330.20px;font-size:13.5px;color:#303030;letter-spacing:0.7px">56</div>
<div class="t lt" id="x_r2p" style="left:1013.00px;top:330.20px;font-size:13.5px;color:#303030;letter-spacing:-0.065px"><span class="dd">₫</span> 1.8M - <span class="dd">₫</span> 1.8M</div>
<div class="t lt" id="x_r2s" style="left:1274.90px;top:330.20px;font-size:13.5px;color:#303030;letter-spacing:0.017px">1 supplier</div>
<div class="t lt" id="x_r2m" style="left:1374.80px;top:330.20px;font-size:13.5px;color:#303030;letter-spacing:0.225px">United States, <span class="u">+36</span></div>
<div class="t lt" id="x_r2h" style="left:1574.60px;top:330.20px;font-size:13.5px;color:#303030;letter-spacing:-0.079px">False</div>
<div class="t lt" id="x_r2g" style="left:1682.70px;top:329.00px;font-size:12.4px;color:#616161;letter-spacing:0.305px">Managed</div>
<div class="t sb" id="x_r3n" style="left:368.20px;top:403.20px;font-size:13.5px;color:#303030;letter-spacing:0.318px">Football Shoes Men's and Women's Students...</div>
<div class="t lt" id="x_r3a" style="left:775.60px;top:402.00px;font-size:12.4px;color:#0c5132;letter-spacing:0.370px">Active</div>
<div class="t lt" id="x_r3e" style="left:855.60px;top:403.20px;font-size:13.5px;color:#303030;letter-spacing:-0.186px">Oct 16 at 2:10</div>
<div class="t lt" id="x_r3v" style="right:926.70px;top:403.20px;font-size:13.5px;color:#303030;letter-spacing:0.7px">68</div>
<div class="t lt" id="x_r3p" style="left:1013.00px;top:403.20px;font-size:13.5px;color:#303030;letter-spacing:0.379px"><span class="dd">₫</span> 2M - <span class="dd">₫</span> 2M</div>
<div class="t lt" id="x_r3s" style="left:1274.90px;top:403.20px;font-size:13.5px;color:#303030;letter-spacing:0.017px">1 supplier</div>
<div class="t lt" id="x_r3m" style="left:1374.80px;top:403.20px;font-size:13.5px;color:#303030;letter-spacing:0.225px">United States, <span class="u">+36</span></div>
<div class="t lt" id="x_r3h" style="left:1574.60px;top:403.20px;font-size:13.5px;color:#303030;letter-spacing:-0.079px">False</div>
<div class="t lt" id="x_r3g" style="left:1682.70px;top:402.00px;font-size:12.4px;color:#616161;letter-spacing:0.305px">Managed</div>
<div class="t sb" id="x_r4n" style="left:368.20px;top:476.20px;font-size:13.5px;color:#303030;letter-spacing:0.288px">8-Qt Stainless Steel Stock Pot with Metal Lid</div>
<div class="t lt" id="x_r4a" style="left:775.60px;top:475.00px;font-size:12.4px;color:#0c5132;letter-spacing:0.370px">Active</div>
<div class="t lt" id="x_r4e" style="left:855.60px;top:476.20px;font-size:13.5px;color:#303030;letter-spacing:0.045px">Oct 16 at 2:09</div>
<div class="t lt" id="x_r4v" style="right:927.40px;top:476.20px;font-size:13.5px;color:#303030;letter-spacing:0px">1</div>
<div class="t lt" id="x_r4p" style="left:1013.00px;top:476.20px;font-size:13.5px;color:#303030;letter-spacing:0.330px"><span class="dd">₫</span> 842.3K - <span class="dd">₫</span> 842.3K</div>
<div class="t lt" id="x_r4s" style="left:1274.90px;top:476.20px;font-size:13.5px;color:#303030;letter-spacing:0.017px">1 supplier</div>
<div class="t lt" id="x_r4m" style="left:1374.80px;top:476.20px;font-size:13.5px;color:#303030;letter-spacing:0.138px">United States</div>
<div class="t lt" id="x_r4h" style="left:1574.60px;top:476.20px;font-size:13.5px;color:#303030;letter-spacing:-0.079px">False</div>
<div class="t lt" id="x_r4g" style="left:1682.70px;top:475.00px;font-size:12.4px;color:#616161;letter-spacing:0.305px">Managed</div>
<div class="t sb" id="x_r5n" style="left:368.20px;top:549.20px;font-size:13.5px;color:#303030;letter-spacing:0.221px">Bath Bomb and Shower Steamer Lizush All N...</div>
<div class="t lt" id="x_r5a" style="left:775.60px;top:548.00px;font-size:12.4px;color:#0c5132;letter-spacing:0.370px">Active</div>
<div class="t lt" id="x_r5e" style="left:855.60px;top:549.20px;font-size:13.5px;color:#303030;letter-spacing:-0.001px">Oct 14 at 2:53</div>
<div class="t lt" id="x_r5v" style="right:927.40px;top:549.20px;font-size:13.5px;color:#303030;letter-spacing:0px">1</div>
<div class="t lt" id="x_r5p" style="left:1013.00px;top:549.20px;font-size:13.5px;color:#303030;letter-spacing:0.264px"><span class="dd">₫</span> 5.2M - <span class="dd">₫</span> 5.2M</div>
<div class="t lt" id="x_r5s" style="left:1274.90px;top:549.20px;font-size:13.5px;color:#303030;letter-spacing:0.017px">1 supplier</div>
<div class="t lt" id="x_r5m" style="left:1374.80px;top:549.20px;font-size:13.5px;color:#303030;letter-spacing:0.427px">Worldwide</div>
<div class="t lt" id="x_r5h" style="left:1574.60px;top:549.20px;font-size:13.5px;color:#303030;letter-spacing:-0.079px">False</div>
<div class="t lt" id="x_r5g" style="left:1682.70px;top:548.00px;font-size:12.4px;color:#616161;letter-spacing:0.305px">Managed</div>
<div class="hl"></div>
<div id="sb"></div>
<div class="fab" style="top:609px"><svg viewBox="0 0 16 16"><path d="M8 1.8 C5.3 1.8 4.1 3.8 4.1 6 V8.3 C4.1 9.4 2.1 10.2 2 11 Q1.9 11.8 2.9 11.8 H13.1 Q14.1 11.8 14 11 C13.9 10.2 11.9 9.4 11.9 8.3 V6 C11.9 3.8 10.7 1.8 8 1.8 Z" fill="none" stroke="#fff" stroke-width="1.3" stroke-linejoin="round"/><path d="M6.5 12.5 Q6.7 14.5 8 14.5 Q9.3 14.5 9.5 12.5" fill="none" stroke="#fff" stroke-width="1.2" stroke-linecap="round"/></svg></div>
<div class="fab" style="top:658px"><svg viewBox="0 0 16 16"><path d="M5.6 2.7 H10.4 Q14.2 2.7 14.2 6.5 V7 Q14.2 10.8 10.4 10.8 H8.6 L5.3 13.7 L5.6 10.8 Q1.8 10.8 1.8 7 V6.5 Q1.8 2.7 5.6 2.7 Z" fill="none" stroke="#fff" stroke-width="1.3" stroke-linejoin="round"/><path d="M4.9 5.6 H10.8 M4.9 8.3 H8.3" stroke="#fff" stroke-width="1.2" stroke-linecap="round"/></svg></div>

</body>
</html>
